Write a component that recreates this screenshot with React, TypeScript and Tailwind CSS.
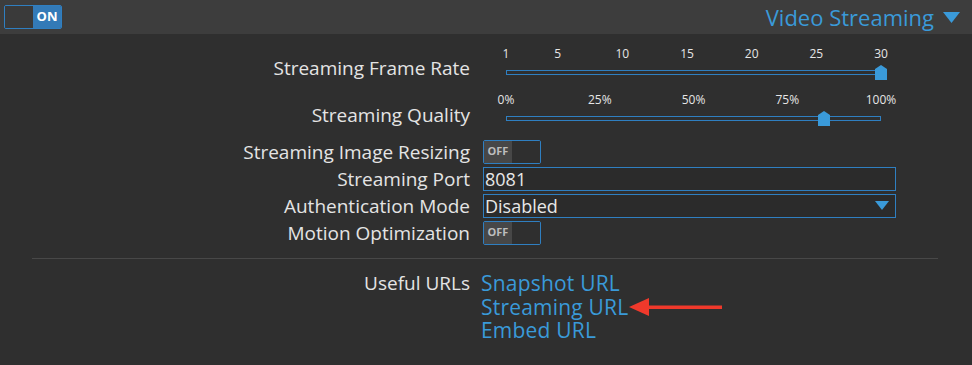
const FONT = "font-['Open_Sans','Liberation_Sans',sans-serif]";

function Toggle ({ on }: { on: boolean }) {
  return (
    <div className="flex h-[24px] w-[58px] border border-[#2f7fc1] rounded-[2px] overflow-hidden">
      {on ? (
        <>
          <div className="w-1/2 bg-[#3a3a3a]" />
          <div className="w-1/2 bg-[#337ab7] text-white text-[13px] font-bold flex items-center justify-center">ON</div>
        </>
      ) : (
        <>
          <div className="w-1/2 bg-[#474747] text-[#bdbdbd] text-[11px] font-bold flex items-center justify-center">OFF</div>
          <div className="w-1/2 bg-[#2f2f2f]" />
        </>
      )}
    </div>
  );
}

function Thumb ({ left }: { left: number }) {
  return (
    <svg className="absolute top-[19px]" style={{ left: left - 6 }} width="12" height="15" viewBox="0 0 12 15">
      <path d="M0 15 V4 L6 0 L12 4 V15 Z" fill="#3a9ad9" />
    </svg>
  );
}

function Slider ({ ticks, value }: { ticks: { label: string; pos: number }[]; value: number }) {
  // track runs from 23px to 398px inside the 413px control
  const x = (f: number) => 23 + f * 375;
  return (
    <div className="relative h-full w-[413px]">
      {ticks.map(t => (
        <span
          key={t.label}
          className="absolute top-0 text-[12px] leading-[16px] text-[#e6e6e6] -translate-x-1/2"
          style={{ left: x(t.pos) }}
        >
          {t.label}
        </span>
      ))}
      <div className="absolute top-[24px] left-[23px] w-[375px] h-[5px] border border-[#2f7fc1]" />
      <Thumb left={x(value)} />
    </div>
  );
}

function Row ({ label, h, children }: { label: string; h: string; children: React.ReactNode }) {
  return (
    <div className={`flex items-center ${h}`}>
      <div className="w-[470px] text-right text-[19px] leading-[24px] text-[#e4e4e4] whitespace-nowrap">{label}</div>
      <div className="ml-[13px] h-full flex items-center">{children}</div>
    </div>
  );
}

export default function App () {
  const fps = [1, 5, 10, 15, 20, 25, 30].map(v => ({ label: String(v), pos: (v - 1) / 29 }));
  const pct = [0, 25, 50, 75, 100].map(v => ({ label: `${v}%`, pos: v / 100 }));

  return (
    <div className={`w-[972px] h-[365px] bg-[#2f2f2f] ${FONT} overflow-hidden`}>
      <div className="h-[34px] bg-[#3d3d3d] flex items-center justify-between pl-[4px] pr-[12px]">
        <Toggle on />
        <div className="flex items-center gap-[9px] text-[22px] leading-[30px] text-[#3a9ad9]">
          <span>Video Streaming</span>
          <svg width="17" height="11" viewBox="0 0 17 11"><path d="M0 0 H17 L8.5 11 Z" fill="#3a9ad9" /></svg>
        </div>
      </div>

      <div className="pt-[10px]">
        <div className="flex h-[48px]">
          <div className="w-[470px] text-right text-[19px] leading-[24px] text-[#e4e4e4] self-center">Streaming Frame Rate</div>
          <div className="ml-[13px] pt-[2px]">
            <Slider ticks={fps} value={1} />
          </div>
        </div>
        <div className="flex h-[46px]">
          <div className="w-[470px] text-right text-[19px] leading-[24px] text-[#e4e4e4] self-center">Streaming Quality</div>
          <div className="ml-[13px]">
            <Slider ticks={pct} value={0.847} />
          </div>
        </div>

        <Row label="Streaming Image Resizing" h="h-[27px]"><Toggle on={false} /></Row>
        <Row label="Streaming Port" h="h-[27px]">
          <div className="w-[413px] h-[24px] border border-[#2f7fc1] bg-[#2b2b2b] text-[18px] text-[#e8e8e8] leading-[22px] px-[1px]">8081</div>
        </Row>
        <Row label="Authentication Mode" h="h-[27px]">
          <div className="w-[413px] h-[24px] border border-[#2f7fc1] bg-[#2b2b2b] text-[18px] text-[#e8e8e8] leading-[22px] px-[1px] flex items-center justify-between">
            <span>Disabled</span>
            <svg className="mr-[5px]" width="14" height="9" viewBox="0 0 14 9"><path d="M0 0 H14 L7 9 Z" fill="#3a9ad9" /></svg>
          </div>
        </Row>
        <Row label="Motion Optimization" h="h-[27px]"><Toggle on={false} /></Row>

        <div className="mt-[12px] ml-[32px] w-[906px] h-px bg-[#484848]" />

        <div className="flex mt-[13px]">
          <div className="w-[470px] text-right text-[19px] text-[#e4e4e4] leading-[23.5px]">Useful URLs</div>
          <div className="ml-[11px] flex flex-col text-[21px] tracking-[0.2px] text-[#3a9ad9] leading-[23.5px]">
            <span>Snapshot URL</span>
            <div className="flex items-center h-[23.5px]">
              <span>Streaming URL</span>
              <svg className="ml-[1px]" width="93" height="20" viewBox="0 0 93 20">
                <path d="M0 10 L20 1 V19 Z" fill="#f0392b" />
                <rect x="18" y="8.5" width="75" height="3.5" fill="#f0392b" />
              </svg>
            </div>
            <span>Embed URL</span>
          </div>
        </div>
      </div>
    </div>
  );
}
